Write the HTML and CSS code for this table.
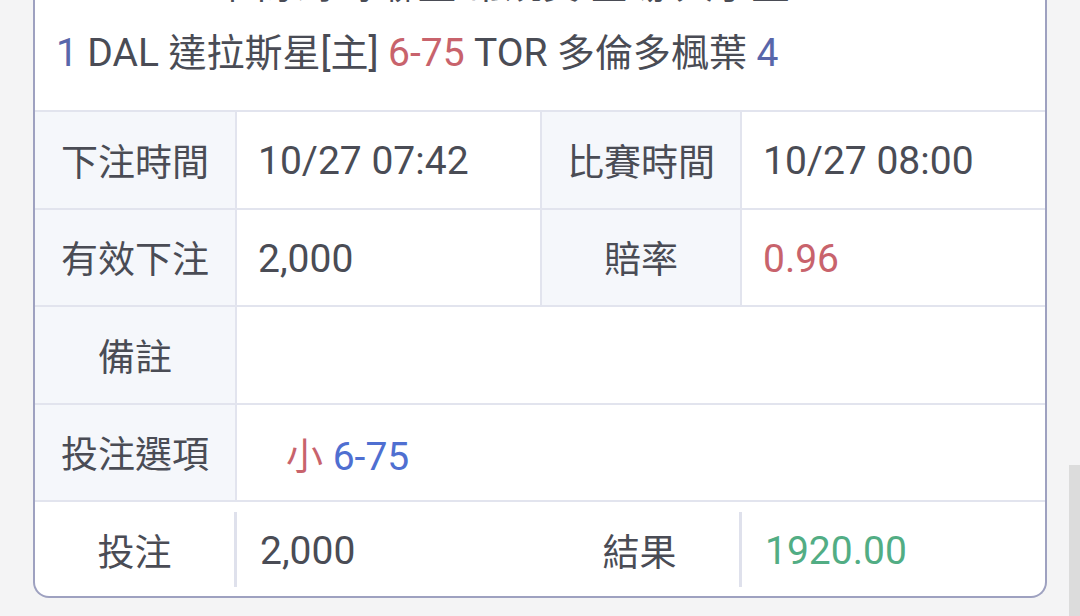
FILE: index.html
```html
<!DOCTYPE html>
<html lang="zh-Hant">
<head>
<meta charset="utf-8">
<title>注單詳情</title>
<link rel="stylesheet" href="styles.css">
</head>
<body>
<div class="page">
  <div class="card">
    <div class="head">
      <div class="line line-prev">NHL 國家冰球聯盟-常規賽 全場 大小盤</div>
      <div class="line"><span class="lat blue-dim">1</span> <span class="lat">DAL</span> 達拉斯星[主] <span class="lat red">6-75</span> <span class="lat">TOR</span> 多倫多楓葉 <span class="lat blue-dim">4</span></div>
    </div>
    <div class="grid">
      <div class="lbl">下注時間</div>
      <div class="val">10/27 07:42</div>
      <div class="lbl">比賽時間</div>
      <div class="val last">10/27 08:00</div>

      <div class="lbl">有效下注</div>
      <div class="val">2,000</div>
      <div class="lbl">賠率</div>
      <div class="val last red">0.96</div>

      <div class="lbl">備註</div>
      <div class="val last span3"></div>

      <div class="lbl">投注選項</div>
      <div class="val last span3"><span class="opt"><span class="red cjk">小</span> <span class="blue">6-75</span></span></div>
    </div>
    <div class="summary">
      <div class="s-lbl">投注</div>
      <div class="s-val">2,000</div>
      <div class="s-lbl">結果</div>
      <div class="s-val green">1920.00</div>
    </div>
  </div>
</div>
<div class="scroll-thumb"></div>
</body>
</html>
```

FILE: styles.css
```css
* { box-sizing: border-box; }

html, body {
  margin: 0;
  height: 616px;
  overflow: hidden;
  background: #f4f4f5;
}

body {
  font-family: Roboto, "Noto Sans CJK TC", "Noto Sans CJK SC", sans-serif;
  font-size: 37px;
  color: #4a4c55;
  position: relative;
}

.page {
  padding: 0 33px 18px 33px;
}

.card {
  margin-top: -48px;
  background: #ffffff;
  border: 2px solid #9ea1c0;
  border-top: none;
  border-radius: 0 0 16px 16px;
  overflow: hidden;
}

.head {
  padding: 2px 20px 24px 21px;
}

.line {
  line-height: 66px;
  height: 66px;
  white-space: nowrap;
  font-size: 38px;
}

.lat { font-size: 39px; }

.line-prev {
  padding-left: 88px;
  line-height: 62px;
}

.red { color: #c8636c; }
.blue { color: #4f6fd1; }
.blue-dim { color: #5866aa; }
.green { color: #52ad84; }

.grid {
  display: grid;
  grid-template-columns: 202px 305px 200px 1fr;
  grid-auto-rows: 97.5px;
}

.lbl, .val {
  border-top: 2px solid #e2e4ee;
  border-right: 2px solid #e2e4ee;
  display: flex;
  align-items: center;
}

.lbl {
  background: #f5f7fb;
  justify-content: center;
}

.val {
  background: #ffffff;
  padding-left: 21px;
  padding-top: 3px;
  font-size: 39px;
}

.cjk { font-size: 37px; }

.val.last { border-right: none; }

.span3 { grid-column: span 3; }

.opt { margin-left: 28px; }

.summary {
  display: grid;
  grid-template-columns: 199px 306px 199px 1fr;
  border-top: 2px solid #e2e4ee;
  padding: 10px 0 9px 0;
  height: 96px;
}

.s-lbl {
  display: flex;
  align-items: center;
  justify-content: center;
}

.s-val {
  display: flex;
  align-items: center;
  border-left: 3px solid #dfe1ec;
  padding-left: 23px;
  padding-top: 3px;
  font-size: 39px;
}

.scroll-thumb {
  position: absolute;
  right: 0;
  top: 465px;
  width: 11px;
  height: 151px;
  background: #dcdcdc;
}
```
